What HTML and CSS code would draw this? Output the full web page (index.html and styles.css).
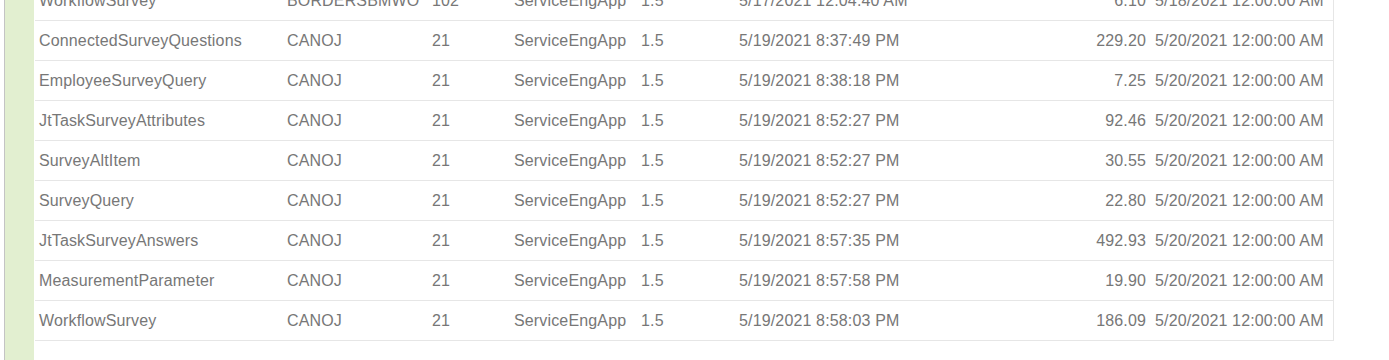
FILE: index.html
```html
<!DOCTYPE html>
<html>
<head>
<meta charset="utf-8">
<link rel="stylesheet" href="styles.css">
</head>
<body>
<div class="page">
  <div class="sidebar"></div>
  <div class="content">
    <table class="grid">
      <colgroup>
        <col class="c-name"><col class="c-user"><col class="c-id"><col class="c-app"><col class="c-ver"><col class="c-date"><col class="c-size"><col class="c-exp">
      </colgroup>
      <tbody>
        <tr><td>WorkflowSurvey</td><td>BORDERSBMWO</td><td>102</td><td>ServiceEngApp</td><td>1.5</td><td>5/17/2021 12:04:40 AM</td><td class="num">6.10</td><td>5/18/2021 12:00:00 AM</td></tr>
        <tr><td>ConnectedSurveyQuestions</td><td>CANOJ</td><td>21</td><td>ServiceEngApp</td><td>1.5</td><td>5/19/2021 8:37:49 PM</td><td class="num">229.20</td><td>5/20/2021 12:00:00 AM</td></tr>
        <tr><td>EmployeeSurveyQuery</td><td>CANOJ</td><td>21</td><td>ServiceEngApp</td><td>1.5</td><td>5/19/2021 8:38:18 PM</td><td class="num">7.25</td><td>5/20/2021 12:00:00 AM</td></tr>
        <tr><td>JtTaskSurveyAttributes</td><td>CANOJ</td><td>21</td><td>ServiceEngApp</td><td>1.5</td><td>5/19/2021 8:52:27 PM</td><td class="num">92.46</td><td>5/20/2021 12:00:00 AM</td></tr>
        <tr><td>SurveyAltItem</td><td>CANOJ</td><td>21</td><td>ServiceEngApp</td><td>1.5</td><td>5/19/2021 8:52:27 PM</td><td class="num">30.55</td><td>5/20/2021 12:00:00 AM</td></tr>
        <tr><td>SurveyQuery</td><td>CANOJ</td><td>21</td><td>ServiceEngApp</td><td>1.5</td><td>5/19/2021 8:52:27 PM</td><td class="num">22.80</td><td>5/20/2021 12:00:00 AM</td></tr>
        <tr><td>JtTaskSurveyAnswers</td><td>CANOJ</td><td>21</td><td>ServiceEngApp</td><td>1.5</td><td>5/19/2021 8:57:35 PM</td><td class="num">492.93</td><td>5/20/2021 12:00:00 AM</td></tr>
        <tr><td>MeasurementParameter</td><td>CANOJ</td><td>21</td><td>ServiceEngApp</td><td>1.5</td><td>5/19/2021 8:57:58 PM</td><td class="num">19.90</td><td>5/20/2021 12:00:00 AM</td></tr>
        <tr><td>WorkflowSurvey</td><td>CANOJ</td><td>21</td><td>ServiceEngApp</td><td>1.5</td><td>5/19/2021 8:58:03 PM</td><td class="num">186.09</td><td>5/20/2021 12:00:00 AM</td></tr>
      </tbody>
    </table>
  </div>
</div>
</body>
</html>
```
FILE: styles.css
```css
html, body {
  margin: 0;
  padding: 0;
  background: #ffffff;
}
.page {
  display: flex;
  height: 360px;
  overflow: hidden;
  font-family: "Liberation Sans", Arial, sans-serif;
  font-size: 16px;
  letter-spacing: 0.15px;
  color: #777777;
}
.sidebar {
  margin-left: 4px;
  width: 29px;
  border-left: 1px solid #c4c4c4;
  background: #e2efd0;
  flex: none;
}
.content {
  flex: none;
  padding-left: 1px;
}
.grid {
  margin-top: -19px;
  border-collapse: collapse;
  table-layout: fixed;
  width: 1298px;
  border-right: 1px solid #e6e6e6;
}
.c-name { width: 248px; }
.c-user { width: 145px; }
.c-id { width: 82px; }
.c-app { width: 127px; }
.c-ver { width: 98px; }
.c-date { width: 250px; }
.c-size { width: 166px; }
.c-exp { width: 182px; }
.grid td {
  height: 39px;
  padding: 0 4px;
  border-bottom: 1px solid #e6e6e6;
  white-space: nowrap;
  overflow: hidden;
  vertical-align: middle;
  line-height: 18px;
}
.grid td.num {
  text-align: right;
  padding-right: 5px;
}
```
